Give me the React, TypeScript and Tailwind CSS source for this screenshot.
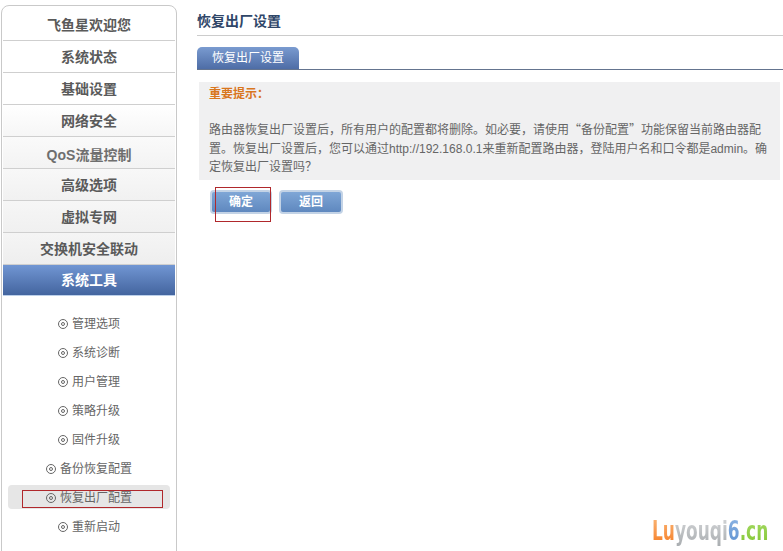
const FONT = "font-['Liberation_Sans','Noto_Sans_CJK_SC',sans-serif]"

const menu = [
  { label: '飞鱼星欢迎您', bg: 'bg-white', text: 'pt-[2px] text-[#5a5a5a]' },
  { label: '系统状态', bg: 'bg-white', text: 'pt-[2px] text-[#5a5a5a]' },
  { label: '基础设置', bg: 'bg-white', text: 'pt-[2px] text-[#5a5a5a]' },
  { label: '网络安全', bg: 'bg-gradient-to-b from-white to-[#f6f6f6]', text: 'pt-[2px] text-[#5a5a5a]' },
  { label: 'QoS流量控制', bg: 'bg-gradient-to-b from-[#fafafa] to-[#f3f3f3]', text: 'pt-[6px] text-[#6e6e6e]' },
  { label: '高级选项', bg: 'bg-gradient-to-b from-[#f8f8f8] to-[#f1f1f1]', text: 'pt-[2px] text-[#5a5a5a]' },
  { label: '虚拟专网', bg: 'bg-gradient-to-b from-[#f6f6f6] to-[#f0f0f0]', text: 'pt-[2px] text-[#5a5a5a]' },
  { label: '交换机安全联动', bg: 'bg-gradient-to-b from-[#f5f5f5] to-[#eeeeee]', text: 'pt-[2px] text-[#5a5a5a]' },
]

const subMenu = ['管理选项', '系统诊断', '用户管理', '策略升级', '固件升级', '备份恢复配置', '恢复出厂配置', '重新启动']

function ActionButton({ label, width }: { label: string; width: string }) {
  return (
    <div className={`${width} h-[24px] rounded-[4px] border-2 border-[#c3d3e6] bg-gradient-to-b from-[#7fa6d6] to-[#5f88bf] flex items-center justify-center text-white text-[12px] font-bold`}>
      {label}
    </div>
  )
}

export default function App() {
  return (
    <div className={`${FONT} relative w-[783px] h-[551px] overflow-hidden bg-white flex`}>
      {/* Sidebar */}
      <div className="w-[176px] h-[560px] ml-[1px] mt-[5px] shrink-0 border border-[#c9c9c9] rounded-t-[8px] pt-[3px] px-[1px]">
        {menu.map((item) => (
          <div
            key={item.label}
            className={`${item.bg} ${item.text} h-[32px] border-b border-[#cfcfcf] flex items-center justify-center text-[14px] font-bold`}
          >
            {item.label}
          </div>
        ))}
        <div className="h-[31px] bg-gradient-to-b from-[#7196d3] to-[#44659f] border-b border-[#bcd0ea] flex items-center justify-center text-[14px] font-bold text-white">
          系统工具
        </div>
        <div className="pt-[13px] px-[5px] flex flex-col">
          {subMenu.map((name) => (
            <div
              key={name}
              className={`h-[29px] shrink-0 flex items-center justify-center text-[12px] text-[#666666] ${name === '恢复出厂配置' ? 'relative' : ''}`}
            >
              {name === '恢复出厂配置' && (
                <div className="absolute left-0 right-0 top-[2px] h-[24px] rounded-[4px] bg-[#e6e6e6]" />
              )}
              <span className="relative flex items-center gap-[4px]">
                <span className="w-[10px] h-[10px] rounded-full border border-[#666666] flex items-center justify-center">
                  <span className="w-[4px] h-[4px] rounded-full border border-[#666666]" />
                </span>
                {name}
              </span>
            </div>
          ))}
        </div>
      </div>

      {/* Main */}
      <div className="flex-1 ml-[20px] min-w-0">
        <div className="h-[36px] pt-[12px] border-b border-[#cccccc] text-[14px] leading-[18px] font-bold text-[#2f4668]">
          恢复出厂设置
        </div>
        <div className="mt-[11px] h-[23px] border-b border-[#64748f]">
          <div className="w-[102px] h-[22px] rounded-t-[5px] bg-gradient-to-b from-[#7a9bd0] to-[#4e6da6] text-white text-[12px] leading-[22px] text-center">
            恢复出厂设置
          </div>
        </div>
        <div className="ml-[2px] mt-[12px] w-[581px] h-[98px] bg-[#f0f0f1] px-[10px] pt-[5px] text-[12px] text-[#666666]">
          <div className="leading-[15px] font-bold text-[#d9761e]">重要提示：</div>
          <div className="mt-[18px] leading-[18.5px]">
            路由器恢复出厂设置后，所有用户的配置都将删除。如必要，请使用<span className="font-['Noto_Sans_CJK_SC',sans-serif]">“备份配置”</span>功能保留当前路由器配置。恢复出厂设置后，您可以通过http://192.168.0.1来重新配置路由器，登陆用户名和口令都是admin。确定恢复出厂设置吗？
          </div>
        </div>
        <div className="ml-[13px] mt-[10px] flex gap-[7px]">
          <ActionButton label="确定" width="w-[62px]" />
          <ActionButton label="返回" width="w-[64px]" />
        </div>
      </div>

      {/* Red annotation boxes */}
      <div className="absolute left-[22px] top-[490px] w-[141px] h-[18px] border border-[#b0282c]" />
      <div className="absolute left-[215px] top-[187px] w-[56px] h-[35px] border border-[#b0282c]" />

      {/* Watermark */}
      <div className="absolute left-[652px] top-[518px] text-[17px] leading-[26px] font-bold font-['DejaVu_Sans',sans-serif] scale-y-[1.55]">
        <span className="bg-gradient-to-b from-[#f9b878] to-[#f57a10] bg-clip-text text-transparent">Lu</span>
        <span className="bg-gradient-to-b from-[#d5d7d9] to-[#a9adb0] bg-clip-text text-transparent">youqi</span>
        <span className="bg-gradient-to-b from-[#8fb6e4] to-[#5b8fd0] bg-clip-text text-transparent">6</span>
        <span className="bg-gradient-to-b from-[#a9dc68] to-[#82c62f] bg-clip-text text-transparent">.cn</span>
      </div>
    </div>
  )
}
